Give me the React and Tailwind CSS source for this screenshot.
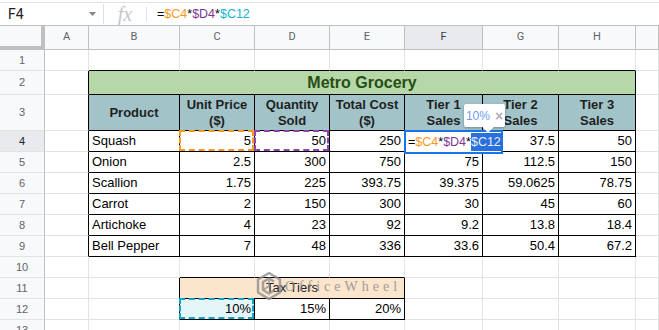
import React from "react";
import clsx from "clsx";

const W = ["w-[45px]", "w-[44px]", "w-[91px]", "w-[75px]", "w-[75px]", "w-[75px]", "w-[78px]", "w-[76px]", "w-[77px]", "w-[23px]"];
const LETTERS = ["", "A", "B", "C", "D", "E", "F", "G", "H", ""];
const HEIGHTS = { 2: "h-[24px]", 3: "h-[36px]" };

const DATA = {
  4: ["Squash", "5", "50", "250", "", "37.5", "50"],
  5: ["Onion", "2.5", "300", "750", "75", "112.5", "150"],
  6: ["Scallion", "1.75", "225", "393.75", "39.375", "59.0625", "78.75"],
  7: ["Carrot", "2", "150", "300", "30", "45", "60"],
  8: ["Artichoke", "4", "23", "92", "9.2", "13.8", "18.4"],
  9: ["Bell Pepper", "7", "48", "336", "33.6", "50.4", "67.2"],
};

const HEADS = [
  ["Product"],
  ["Unit Price", "($)"],
  ["Quantity", "Sold"],
  ["Total Cost", "($)"],
  ["Tier 1", "Sales"],
  ["Tier 2", "Sales"],
  ["Tier 3", "Sales"],
];

const inTable = (r, c) =>
  (r >= 2 && r <= 9 && c >= 2 && c <= 8) || (r >= 11 && r <= 12 && c >= 3 && c <= 5);

function edges(r, c) {
  const right = inTable(r, c) || inTable(r, c + 1) ? "border-r-black" : "border-r-[#e2e3e3]";
  const bottom = inTable(r, c) || inTable(r + 1, c) ? "border-b-black" : "border-b-[#e2e3e3]";
  return `${right} ${bottom}`;
}

function Cell({ r, c, w, className, children }) {
  return (
    <div className={clsx("flex shrink-0 items-center border-r border-b px-[3px]", w ?? W[c], edges(r, c), className)}>
      {children}
    </div>
  );
}

function RowHead({ n }) {
  return (
    <div
      className={clsx(
        "flex w-[45px] shrink-0 items-center justify-center border-r border-b border-r-[#c0c0c0] border-b-[#e2e3e3] text-[11px]",
        n === 4 ? "bg-[#e8eaed] text-[#202124]" : "bg-[#f8f9fa] text-[#5f6368]"
      )}
    >
      {n}
    </div>
  );
}

function Dashed({ color }) {
  return <div className={clsx("pointer-events-none absolute -left-px -top-px right-0 bottom-0 border-2 border-dashed", color)} />;
}

function Formula({ sel }) {
  return (
    <>
      <span>=</span>
      <span className="text-[#f7981d]">$C4</span>
      <span>*</span>
      <span className="text-[#7e3794]">$D4</span>
      <span>*</span>
      <span className={sel ? "bg-[#2a6fdb] text-[#e8f0fe]" : "text-[#12b5cb]"}>$C12</span>
    </>
  );
}

function Logo() {
  return (
    <svg width="28" height="30" viewBox="0 0 28 30" fill="none" stroke="#8f8f8f" strokeWidth="2.4" strokeLinejoin="round">
      <path d="M14 2 L25 8.5 L25 21.5 L14 28 L3 21.5 L3 8.5 Z" />
      <path d="M19 10.5 L14 7.5 L8 11 L8 19 L14 22.5 L19 19.5" />
      <path d="M14 7.5 L14 15 L8 19" strokeWidth="1.6" />
    </svg>
  );
}

function Row({ r, children }) {
  return (
    <div className={clsx("flex", HEIGHTS[r] ?? "h-[21px]")}>
      <RowHead n={r} />
      {children}
    </div>
  );
}

function Blank({ r, from, to }) {
  const out = [];
  for (let c = from; c <= to; c++) out.push(<Cell key={c} r={r} c={c} />);
  return out;
}

export default function App() {
  return (
    <div className="h-[330px] w-[659px] overflow-hidden bg-white text-[13px] text-black" style={{ fontFamily: '"Liberation Sans", Arial, sans-serif' }}>
      {/* formula bar */}
      <div className="h-[26px] border-b border-[#c0c0c0] pt-[2px]">
        <div className="flex h-full items-center border-t border-[#e0e0e0]">
          <div className="flex w-[103px] items-center justify-between pl-[8px] pr-[7px]">
            <span className="text-[14px] text-[#202124]" style={{ fontFamily: "Roboto, sans-serif" }}>F4</span>
            <svg width="7" height="4" viewBox="0 0 7 4"><path d="M0 0 L7 0 L3.5 4 Z" fill="#80868b" /></svg>
          </div>
          <div className="h-[20px] w-px bg-[#e0e0e0]" />
          <div className="flex w-[42px] items-center justify-center">
            <span className="text-[20px] italic leading-none text-[#c4c7ca]" style={{ fontFamily: '"Liberation Serif", serif' }}>fx</span>
          </div>
          <div className="h-[14px] w-px bg-[#e0e0e0]" />
          <div className="pl-[10px] text-[12.5px]">
            <Formula />
          </div>
        </div>
      </div>

      {/* column headers */}
      <div className="flex h-[24px]">
        <div className="w-[45px] shrink-0 border-r-4 border-b-4 border-[#c0c0c0] bg-[#f8f9fa]" />
        {LETTERS.slice(1).map((l, i) => (
          <div
            key={i}
            className={clsx(
              "flex shrink-0 items-center justify-center border-r border-b border-[#c0c0c0] text-[11px]",
              W[i + 1],
              l === "F" ? "bg-[#e8eaed] text-[#3c4043]" : "bg-[#f8f9fa] text-[#5f6368]"
            )}
            style={{ fontFamily: "Roboto, sans-serif" }}
          >
            {l}
          </div>
        ))}
      </div>

      <Row r={1}>
        <Blank r={1} from={1} to={9} />
      </Row>

      <Row r={2}>
        <Cell r={2} c={1} />
        <Cell r={2} c={8} w="w-[547px]" className="justify-center bg-[#b6d7a8]">
          <span className="text-[16px] font-bold text-[#274e13]">Metro Grocery</span>
        </Cell>
        <Cell r={2} c={9} />
      </Row>

      <Row r={3}>
        <Cell r={3} c={1} />
        {HEADS.map((lines, i) => (
          <Cell key={i} r={3} c={i + 2} className="justify-center bg-[#a2c4c9] text-center font-bold leading-[16px] text-[#1f1f1f]">
            <div>
              {lines.map((t) => (
                <div key={t}>{t}</div>
              ))}
            </div>
          </Cell>
        ))}
        <Cell r={3} c={9} />
      </Row>

      {[4, 5, 6, 7, 8, 9].map((r) => (
        <Row key={r} r={r}>
          <Cell r={r} c={1} />
          {DATA[r].map((v, i) => {
            const c = i + 2;
            if (r === 4 && c === 6) {
              return (
                <Cell key={c} r={r} c={c} className="relative">
                  <div className="absolute -left-px -top-px z-10 flex h-[24px] w-[99px] items-center border-2 border-[#1a73e8] bg-white pl-[2px] text-[12.5px]">
                    <Formula sel />
                  </div>
                  <div className="absolute left-[59px] top-[-27px] z-20 flex h-[23px] w-[41px] items-center justify-center gap-[5px] rounded-[2px] bg-white shadow-[0_1px_3px_rgba(0,0,0,0.3)]">
                    <span className="text-[12px] text-[#6d9eeb]">10%</span>
                    <span className="text-[14px] font-bold leading-none text-[#b0b3b8]">×</span>
                    <div className="absolute bottom-[-4px] left-[20px] h-[8px] w-[8px] rotate-45 bg-white" />
                  </div>
                </Cell>
              );
            }
            return (
              <Cell key={c} r={r} c={c} className={clsx(c === 2 ? "justify-start" : "justify-end", r === 4 && (c === 3 || c === 4) && "relative")}>
                {v}
                {r === 4 && c === 3 && <Dashed color="border-[#f7981d]" />}
                {r === 4 && c === 4 && <Dashed color="border-[#8e44ad]" />}
              </Cell>
            );
          })}
          <Cell r={r} c={9} />
        </Row>
      ))}

      <Row r={10}>
        <Blank r={10} from={1} to={9} />
      </Row>

      <Row r={11}>
        <Blank r={11} from={1} to={2} />
        <Cell r={11} c={5} w="w-[225px]" className="relative justify-center bg-[#fce5cd] text-[#202124]">
          Tax Tiers
          <div className="pointer-events-none absolute left-[75px] top-[-7px] z-20 flex items-center opacity-80">
            <Logo />
            <span className="ml-[2px] text-[14px] tracking-[4px] text-[#8a8a8a]" style={{ fontFamily: '"Liberation Serif", serif' }}>
              OfficeWheel
            </span>
          </div>
        </Cell>
        <Blank r={11} from={6} to={9} />
      </Row>

      <Row r={12}>
        <Blank r={12} from={1} to={2} />
        <Cell r={12} c={3} className="relative justify-end bg-[#e4f5f8]">
          10%
          <Dashed color="border-[#14a3c2]" />
        </Cell>
        <Cell r={12} c={4} className="justify-end">15%</Cell>
        <Cell r={12} c={5} className="justify-end">20%</Cell>
        <Blank r={12} from={6} to={9} />
      </Row>

      <Row r={13}>
        <Blank r={13} from={1} to={9} />
      </Row>
    </div>
  );
}
